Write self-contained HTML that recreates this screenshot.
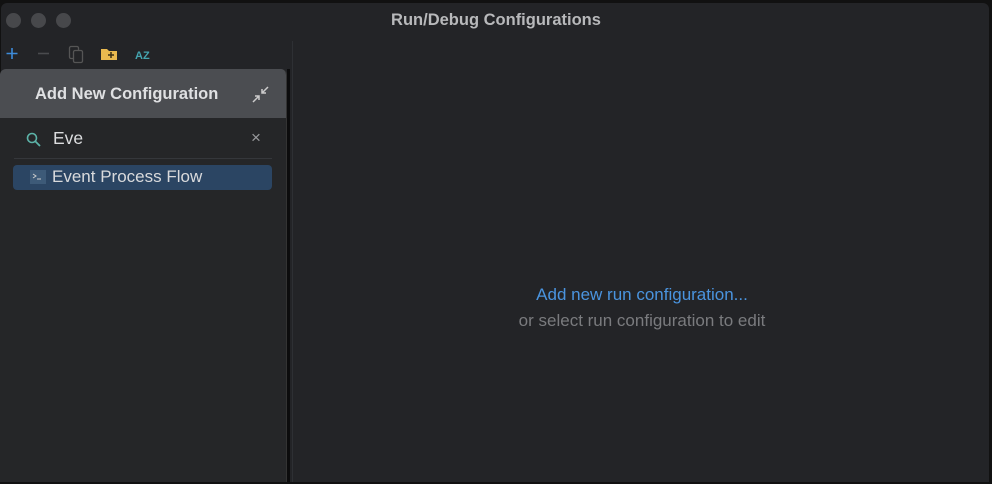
<!DOCTYPE html>
<html><head><meta charset="utf-8"><style>
*{margin:0;padding:0;box-sizing:border-box}
body{width:992px;height:484px;background:#111;overflow:hidden;font-family:"Liberation Sans",sans-serif;position:relative}
.win{position:absolute;left:1px;top:3px;width:988px;height:479px;background:#232427;border-radius:6px 6px 0 0}
.dot{position:absolute;top:10px;width:15px;height:15px;border-radius:50%;background:#47484b}
.title{position:absolute;top:8px;left:0;width:990px;text-align:center;color:#b8b9bb;font-weight:bold;font-size:16.5px}
.split{position:absolute;left:291px;top:38px;width:1px;height:441px;background:#2e3034}
.popup{position:absolute;left:0;top:69px;width:287px;height:413px;background:#252628;border-radius:6px 6px 0 0;overflow:hidden;border-right:1px solid #333}
.pbar{position:absolute;left:287px;top:69px;width:3px;height:413px;background:#0c0c0d}
.phead{height:49px;background:#4b4d51;color:#dfe0e2;font-weight:bold;font-size:16.5px;padding:16px 0 0 35px}
.item{position:absolute;left:13px;top:96px;width:259px;height:25px;background:#2b4563;border-radius:4px;color:#d9dadc;font-size:17px;padding:2px 0 0 39px}
.sep{position:absolute;left:14px;top:89px;width:258px;height:1px;background:#35373b}
.ctr{position:absolute;left:0;width:990px;padding-left:292px;text-align:center;font-size:17px}
</style></head><body>
<div class="win">
<div class="dot" style="left:5px"></div><div class="dot" style="left:30px"></div><div class="dot" style="left:55px"></div>
<div class="title">Run/Debug Configurations</div>
<svg style="position:absolute;left:0;top:38px" width="160" height="24">
<path d="M11 7v11M5.5 12.5h11" stroke="#3d8bd9" stroke-width="1.6"/>
<path d="M37 12.5h11" stroke="#4a4b4e" stroke-width="1.6"/>
<rect x="68.5" y="5.5" width="9" height="12" rx="1.5" fill="none" stroke="#555" stroke-width="1.3"/>
<rect x="72.5" y="9.5" width="9" height="12" rx="1.5" fill="#232427" stroke="#555" stroke-width="1.3"/>
<path d="M100 8h6l2 2h8v9h-16z" fill="#e9b94f"/>
<path d="M110 11v6M107 14h6" stroke="#3a2f14" stroke-width="1.5"/>
<text x="134" y="18" fill="#44a5b0" font-size="11" font-weight="bold" font-family="Liberation Sans">AZ</text>
</svg>
<div class="split"></div>
<div class="ctr" style="top:282px;color:#4a94df">Add new run configuration...</div>
<div class="ctr" style="top:308px;color:#7a7b7e">or select run configuration to edit</div>
</div>
<div class="popup">
<div class="phead">Add New Configuration</div>
<svg style="position:absolute;left:252px;top:17px" width="17" height="17"><path d="M16 1l-6 6M10 3v4h4M1 16l6-6M3 10h4v4" stroke="#ccc" stroke-width="1.5" fill="none"/></svg>
<svg style="position:absolute;left:25px;top:62px" width="18" height="18"><circle cx="7" cy="7" r="4.5" fill="none" stroke="#5cb3a8" stroke-width="1.6"/><path d="M10.5 10.5l4.5 4.5" stroke="#5cb3a8" stroke-width="1.8"/></svg>
<div style="position:absolute;left:53px;top:59px;color:#dcdddf;font-size:17.5px">Eve</div>
<div style="position:absolute;left:251px;top:59px;color:#9a9b9e;font-size:17px">×</div>
<div class="sep"></div>
<div class="item">Event Process Flow</div>
<svg style="position:absolute;left:30px;top:101px" width="16" height="14"><rect width="16" height="14" fill="#3d5a78"/><path d="M3 4l3 2-3 2" stroke="#ccc" stroke-width="1" fill="none"/><path d="M7 9h4" stroke="#ccc"/></svg>
</div>
<div class="pbar"></div>
</body></html>
